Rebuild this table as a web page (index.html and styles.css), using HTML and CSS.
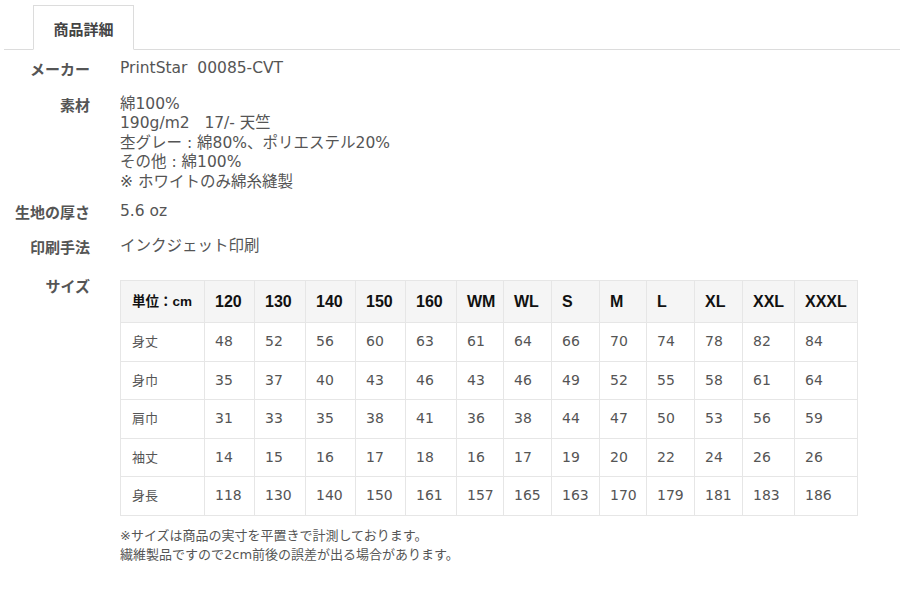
FILE: index.html
```html
<!DOCTYPE html>
<html lang="ja">
<head>
<meta charset="utf-8">
<link rel="stylesheet" href="styles.css">
</head>
<body>
<div class="page">
  <div class="tabs">
    <div class="tab">商品詳細</div>
  </div>
  <div class="specs">
    <div class="row r1">
      <div class="label">メーカー</div>
      <div class="value">PrintStar&nbsp;&nbsp;00085-CVT</div>
    </div>
    <div class="row r2">
      <div class="label">素材</div>
      <div class="value">綿100%<br>190g/m2&nbsp;&nbsp;&nbsp;17/- 天竺<br>杢グレー : 綿80%、ポリエステル20%<br>その他 : 綿100%<br>※ ホワイトのみ綿糸縫製</div>
    </div>
    <div class="row r3">
      <div class="label">生地の厚さ</div>
      <div class="value">5.6 oz</div>
    </div>
    <div class="row r4">
      <div class="label">印刷手法</div>
      <div class="value">インクジェット印刷</div>
    </div>
    <div class="row r5">
      <div class="label">サイズ</div>
      <div class="value">
        <table class="size">
          <colgroup>
            <col class="c84"><col class="c50"><col class="c51"><col class="c50"><col class="c50"><col class="c51"><col class="c47"><col class="c48"><col class="c48"><col class="c47"><col class="c48"><col class="c48"><col class="c52"><col class="c63">
          </colgroup>
          <thead>
            <tr><th class="unit">単位：cm</th><th>120</th><th>130</th><th>140</th><th>150</th><th>160</th><th>WM</th><th>WL</th><th>S</th><th>M</th><th>L</th><th>XL</th><th>XXL</th><th>XXXL</th></tr>
          </thead>
          <tbody>
            <tr><td>身丈</td><td>48</td><td>52</td><td>56</td><td>60</td><td>63</td><td>61</td><td>64</td><td>66</td><td>70</td><td>74</td><td>78</td><td>82</td><td>84</td></tr>
            <tr><td>身巾</td><td>35</td><td>37</td><td>40</td><td>43</td><td>46</td><td>43</td><td>46</td><td>49</td><td>52</td><td>55</td><td>58</td><td>61</td><td>64</td></tr>
            <tr><td>肩巾</td><td>31</td><td>33</td><td>35</td><td>38</td><td>41</td><td>36</td><td>38</td><td>44</td><td>47</td><td>50</td><td>53</td><td>56</td><td>59</td></tr>
            <tr><td>袖丈</td><td>14</td><td>15</td><td>16</td><td>17</td><td>18</td><td>16</td><td>17</td><td>19</td><td>20</td><td>22</td><td>24</td><td>26</td><td>26</td></tr>
            <tr><td>身長</td><td>118</td><td>130</td><td>140</td><td>150</td><td>161</td><td>157</td><td>165</td><td>163</td><td>170</td><td>179</td><td>181</td><td>183</td><td>186</td></tr>
          </tbody>
        </table>
        <p class="note">※サイズは商品の実寸を平置きで計測しております。<br>繊維製品ですので2cm前後の誤差が出る場合があります。</p>
      </div>
    </div>
  </div>
</div>
</body>
</html>
```
FILE: styles.css
```css
html, body {
  margin: 0;
  padding: 0;
  background: #fff;
}
body {
  font-family: "DejaVu Sans", "Noto Sans CJK JP", sans-serif;
  color: #555;
}
.page {
  width: 900px;
}
.tabs {
  margin-left: 4px;
  padding-top: 5px;
  border-bottom: 1px solid #dcdcdc;
  display: flex;
}
.tab {
  margin-left: 29px;
  width: 101px;
  height: 45px;
  margin-bottom: -1px;
  border: 1px solid #dcdcdc;
  border-bottom: 1px solid #fff;
  background: #fff;
  box-sizing: border-box;
  display: flex;
  align-items: center;
  justify-content: center;
  font-family: "Noto Sans CJK JP", sans-serif;
  font-weight: bold;
  font-size: 15px;
  color: #444;
  padding-top: 1px;
}
.row {
  display: grid;
  grid-template-columns: 90px 1fr;
  column-gap: 30px;
  line-height: 19.5px;
}
.label {
  text-align: right;
  font-family: "Noto Sans CJK JP", sans-serif;
  font-weight: bold;
  font-size: 15px;
  color: #555;
}
.value {
  font-size: 15.5px;
  color: #555;
}
.r1 { margin-top: 9px; }
.r2 { margin-top: 16px; }
.r3 { margin-top: 10px; }
.r4 { margin-top: 15px; }
.r5 { margin-top: 20px; }
.size {
  margin-top: 4px;
  border-collapse: collapse;
  table-layout: fixed;
  width: 738px;
  font-size: 14px;
}
.c84 { width: 84px; }
.c47 { width: 47px; }
.c48 { width: 48px; }
.c50 { width: 50px; }
.c51 { width: 51px; }
.c52 { width: 52px; }
.c63 { width: 63px; }
.size th, .size td {
  border: 1px solid #e6e6e6;
  text-align: left;
  padding: 0 0 0 10px;
  white-space: nowrap;
}
.size thead tr {
  height: 42px;
  background: #f5f5f5;
}
.size th {
  font-family: "Liberation Sans", "Noto Sans CJK JP", sans-serif;
  font-weight: bold;
  font-size: 16px;
  color: #111;
}
.size th.unit {
  font-size: 13.5px;
  padding-left: 11px;
}
.size tbody tr {
  height: 38.6px;
}
.size td {
  color: #555;
}
.size td:first-child {
  padding-left: 11px;
  font-size: 13px;
}
.note {
  margin: 10px 0 0;
  font-size: 13px;
  line-height: 19px;
  color: #555;
}
```
